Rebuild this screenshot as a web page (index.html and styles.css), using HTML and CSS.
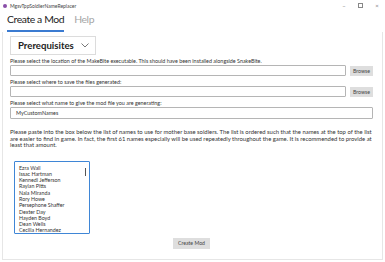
FILE: index.html
```html
<!DOCTYPE html>
<html>
<head>
<meta charset="utf-8">
<link rel="stylesheet" href="styles.css">
</head>
<body>
<div class="window">
  <div class="titlebar">
    <span class="appicon"></span>
    <span class="title">MgsvTppSoldierNameReplacer</span>
    <span class="controls">
      <span class="ctl">&#8211;</span>
      <span class="ctl box"></span>
      <span class="ctl">&#215;</span>
    </span>
  </div>
  <div class="tabs">
    <span class="tab active">Create a Mod</span>
    <span class="tab">Help</span>
  </div>
  <div class="panel">
    <div class="dropdown">
      <span>Prerequisites</span>
      <svg class="chev" width="8" height="5" viewBox="0 0 8 5"><path d="M0.5 0.5 L4 4 L7.5 0.5" fill="none" stroke="#555" stroke-width="0.8"/></svg>
    </div>
    <div class="label">Please select the location of the MakeBite executable. This should have been installed alongside SnakeBite.</div>
    <div class="row">
      <div class="input"></div>
      <div class="btn">Browse</div>
    </div>
    <div class="label">Please select where to save the files generated:</div>
    <div class="row">
      <div class="input"></div>
      <div class="btn">Browse</div>
    </div>
    <div class="label">Please select what name to give the mod file you are generating:</div>
    <div class="input full">MyCustomNames</div>
    <div class="para">Please paste into the box below the list of names to use for mother base soldiers. The list is ordered such that the names at the top of the list are easier to find in game. In fact, the first 61 names especially will be used repeatedly throughout the game. It is recommended to provide at least that amount.</div>
    <div class="names">
      <div class="list">Ezra Wall<br>Issac Hartman<br>Kennedi Jefferson<br>Raylan Pitts<br>Nala Miranda<br>Rory Howe<br>Persephone Shaffer<br>Dexter Day<br>Hayden Boyd<br>Dean Wells<br>Cecilia Hernandez</div>
      <span class="scroll"></span>
    </div>
    <div class="actions">
      <div class="btn create">Create Mod</div>
    </div>
  </div>
</div>
</body>
</html>
```
FILE: styles.css
```css
* { box-sizing: border-box; }
html, body { margin: 0; padding: 0; background: #fff; }
body { font-family: Lato, "Noto Sans", sans-serif; color: #222; width: 385px; height: 262px; overflow: hidden; }
.window { display: flex; flex-direction: column; height: 262px; }
.titlebar { height: 11px; display: flex; align-items: center; padding-left: 3px; }
.appicon { width: 4px; height: 4px; border-radius: 50%; background: #8a4fa8; margin-right: 3px; }
.title { font-size: 5px; color: #444; }
.controls { margin-left: auto; display: flex; align-items: center; }
.ctl { font-size: 6px; color: #777; width: 16px; text-align: center; }
.ctl.box { width: 5px; height: 5px; border: 0.7px solid #888; margin: 0 6px; }
.tabs { height: 21px; display: flex; align-items: flex-end; padding-left: 7px; gap: 10px; }
.tab { font-size: 10.4px; letter-spacing: -0.4px; line-height: 16px; color: #a6a6a6; padding-bottom: 3px; border-bottom: 2px solid transparent; }
.tab.active { color: #222; border-bottom-color: #3b7bd1; }
.panel { flex: 1; margin: 0 2px 2px 2px; border: 1px solid #e6e6e6; border-top: none; padding: 4px 9px 0 7px; display: flex; flex-direction: column; }
.dropdown { width: 86px; height: 19px; border: 1px solid #dcdcdc; display: flex; align-items: center; padding-left: 7px; font-size: 9.6px; font-weight: 700; color: #222; }
.chev { margin-left: auto; margin-right: 6px; }
.label { font-size: 5.4px; line-height: 7px; color: #333; margin-top: 3px; white-space: nowrap; }
.row { display: flex; align-items: center; gap: 4px; }
.input { flex: 1; height: 11px; border: 1px solid #b5b5b5; border-radius: 1px; }
.input.full { flex: none; height: 12px; font-size: 5.4px; line-height: 10px; padding-left: 5px; color: #333; }
.btn { background: #dedede; color: #444; font-size: 5.2px; height: 10px; line-height: 10px; padding: 0 3px; }
.para { font-size: 5.9px; line-height: 6.5px; color: #333; margin-top: 10px; }
.names { position: relative; width: 76px; height: 73px; margin: 12px 0 0 4px; border: 1px solid #3f86d6; border-radius: 1px; overflow: hidden; padding: 3px 0 0 4px; }
.list { font-size: 5.3px; line-height: 6.3px; color: #333; white-space: nowrap; }
.scroll { position: absolute; right: 3px; top: 6px; width: 1px; height: 8px; background: #555; }
.actions { display: flex; justify-content: center; margin-top: 4px; }
.btn.create { height: 11px; line-height: 11px; padding: 0 5px; }
```
